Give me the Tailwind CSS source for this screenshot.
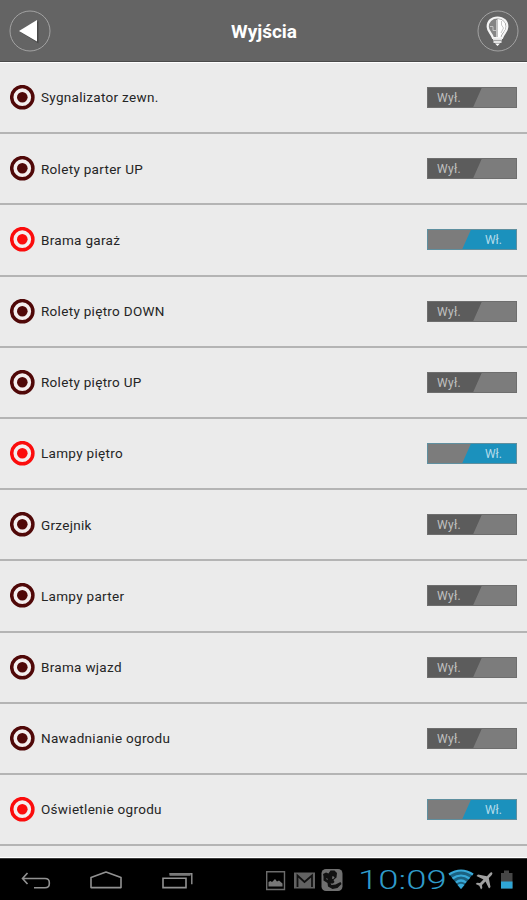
<!DOCTYPE html>
<html lang="pl">

<head>
    <meta charset="UTF-8">
    <meta name="viewport" content="width=device-width, initial-scale=1.0">
    <title>Wyjścia</title>
    <script src="https://cdn.jsdelivr.net/npm/@tailwindcss/browser@4"></script>
</head>

<body class="h-[900px] flex flex-col overflow-hidden bg-[#ebebeb] font-['Roboto',sans-serif]">
    <header class="h-[62px] shrink-0 flex items-center justify-between pl-[9px] pr-[8px] bg-[#646464] border-b border-[#4a4a4a]">
        <button aria-label="Wstecz">
            <svg class="block size-[42px]" viewBox="0 0 42 42">
                <circle cx="21" cy="21" r="20" fill="none" stroke="#a2a2a2" />
                <path d="M29.500 11v22.500L11 22z" fill="#484848" />
                <path d="M28 10v21.500L10 21z" fill="#fff" />
            </svg>
        </button>
        <h1 class="pt-1 text-[19px] font-bold text-white">Wyjścia</h1>
        <button aria-label="Światło">
            <svg class="block size-[42px]" viewBox="0 0 42 42">
                <circle cx="21" cy="21" r="20" fill="none" stroke="#a2a2a2" />
                <path d="M20.500 7.500c-6 0-9.800 4-9.800 9.200 0 5 4 6.500 5.300 11.300h9c1.300-4.800 5.300-6.300 5.300-11.300 0-5.200-3.800-9.200-9.800-9.200z" fill="#858585" stroke="#f5f5f5" stroke-width="2.200" />
                <path d="M20.500 9c5 0 8.200 3.200 8.200 7.500 0 4.500-3.700 6-5 10.500h-3.200z" fill="#fff" />
                <path d="M19.500 10v17M16 16.500v4h3M13 16.500h3" fill="none" stroke="#c4c4c4" />
                <path d="M24.500 11v4l2 3-2.500 5" fill="none" stroke="#c8c8c8" />
                <path d="M16 29.500h9M16.500 32h8" stroke="#e4e4e4" stroke-width="1.900" />
                <path d="M18 33.500h5L20.500 36z" fill="#fff" />
            </svg>
        </button>
    </header>

    <main class="h-[796px] shrink-0 overflow-hidden border-y border-white">
        <ul id="outputs"></ul>
    </main>

    <footer class="h-[42px] shrink-0 flex items-center bg-black border-t border-[#3a3a3a]">
        <svg class="w-[250px] h-[41px]" viewBox="0 0 250 41" fill="none" stroke="#929292" stroke-width="1.600">
            <path d="M27.500 14L22.500 19.500l5 5.500M22.500 19.500H45q4.300 0 4.300 4v1.200q0 4-4.300 4H34" />
            <path d="M91 28.600V18.400L106 13l15 5.400v10.200z" stroke-linejoin="round" />
            <path d="M163 19.200h23v9.400h-23z" />
            <path d="M169.500 14.800h22.300v10.400" stroke-width="1.400" />
            <path d="M169.500 15.500h21" stroke-width="2.600" stroke="#777" />
        </svg>
        <svg class="ml-[15px] w-[80px] h-[41px]" viewBox="265 0 80 41" fill="none">
            <path d="M266.700 12.700h17.800v17.800h-17.800z" stroke="#6b6b6b" stroke-width="1.400" />
            <path d="M268.500 27.500v-4.500l2-1 1.500 1 3-3 2 2.500 2-1 3.500 3v3z" fill="#777" />
            <path d="M294 13.500h21v16h-21z" fill="#626262" />
            <path d="M297.500 28V16.500l7 6.500 7.500-6.500V28" stroke="#111" stroke-width="1.800" />
            <rect x="321.500" y="10" width="21" height="22" rx="4.500" fill="#707070" />
            <path d="M323 15l3-1.500 2.500 1 2-3 4 0 2.500 2.500-.5 4.500-3 2.500 1 2-1.500 1.500h-2.500l1 1.500 4-.5 5-2.500 1 2-4 4-5 1-4.500-2.500-.5-3.500-4-2.500v-4z" fill="#111" />
            <path d="M332.500 17l2 1-.5 1.500-2 .5zM326 19l2 1-1 1z" fill="#707070" />
        </svg>
        <!-- Wide, light clock digits -->
        <div class="ml-[13px] w-[88px] h-[41px] shrink-0 flex items-center pt-[2px]">
            <time class="origin-left scale-x-[1.46] text-[25px] leading-none font-light text-[#2f9bc9] font-['Roboto',sans-serif]">10:09</time>
        </div>
        <svg class="ml-[2px] w-[75px] h-[41px]" viewBox="448 0 75 41" fill="none">
            <path d="M449 15q12-7.500 24 0L461 30z" fill="#1b6180" />
            <path d="M449 15.500q12-8 24 0M452.500 19.500q8.500-6 17 0M456 23.500q5-4 10 0" stroke="#38a9d8" stroke-width="2.200" />
            <path d="M457.500 26q3.500-2.500 7 0l-3.500 4z" fill="#38a9d8" />
            <path d="M492 13.500c1 1 .2 2.300-3.200 5.600l1.700 9-1.500 1.500-3.500-7-3.500 3.500.3 3-1.300 1.300-1.700-3.600-3.600-1.700 1.300-1.300 3 .3 3.500-3.500-7-3.500 1.500-1.500 9 1.700c3-3.500 4-4.800 5-3.800z" fill="#a0a0a0" />
            <path d="M501 14h3v-2.500h5V14h3.500v15.500H501z" fill="#464646" />
            <path d="M501 22.500h11.500v7H501z" fill="#2fa5d5" />
        </svg>
    </footer>

    <script>
        const outputs = [
            { name: 'Sygnalizator zewn.', on: false },
            { name: 'Rolety parter UP', on: false },
            { name: 'Brama garaż', on: true },
            { name: 'Rolety piętro DOWN', on: false },
            { name: 'Rolety piętro UP', on: false },
            { name: 'Lampy piętro', on: true },
            { name: 'Grzejnik', on: false },
            { name: 'Lampy parter', on: false },
            { name: 'Brama wjazd', on: false },
            { name: 'Nawadnianie ogrodu', on: false },
            { name: 'Oświetlenie ogrodu', on: true }
        ];

        const switchOn = `
            <button class="w-[90px] h-[21px] flex items-center justify-end pr-[14px] pt-px text-[12px] text-[#b4dceb] border border-[#5f8f9f] bg-[linear-gradient(114deg,#7c7c7c_44%,#1b91bd_45%)] bg-origin-border">Wł.</button>`;
        const switchOff = `
            <button class="w-[90px] h-[21px] flex items-center pl-[9px] pt-px text-[12px] tracking-[0.3px] text-[#c0c0c0] border border-[#6e6e6e] bg-[linear-gradient(114deg,#5c5c5c_55%,#7c7c7c_56%)] bg-origin-border">Wył.</button>`;

        document.querySelector('#outputs').innerHTML = outputs.map(item => `
            <li class="h-[71.2px] flex items-center px-[10px] border-b-2 border-[#b4b4b4]">
                <svg class="size-[25px] ${item.on ? 'text-[#fb0c0c]' : 'text-[#500808]'}" viewBox="0 0 25 25">
                    <circle cx="12.300" cy="12.200" r="10.600" fill="#f4eeee" stroke="currentColor" stroke-width="3.500" />
                    <circle cx="12.300" cy="12.200" r="5.300" fill="currentColor" />
                </svg>
                <span class="flex-1 ml-[6px] text-[13.5px] tracking-[0.3px] text-[#252525]">${item.name}</span>
                ${item.on ? switchOn : switchOff}
            </li>`).join('');
    </script>
</body>

</html>
